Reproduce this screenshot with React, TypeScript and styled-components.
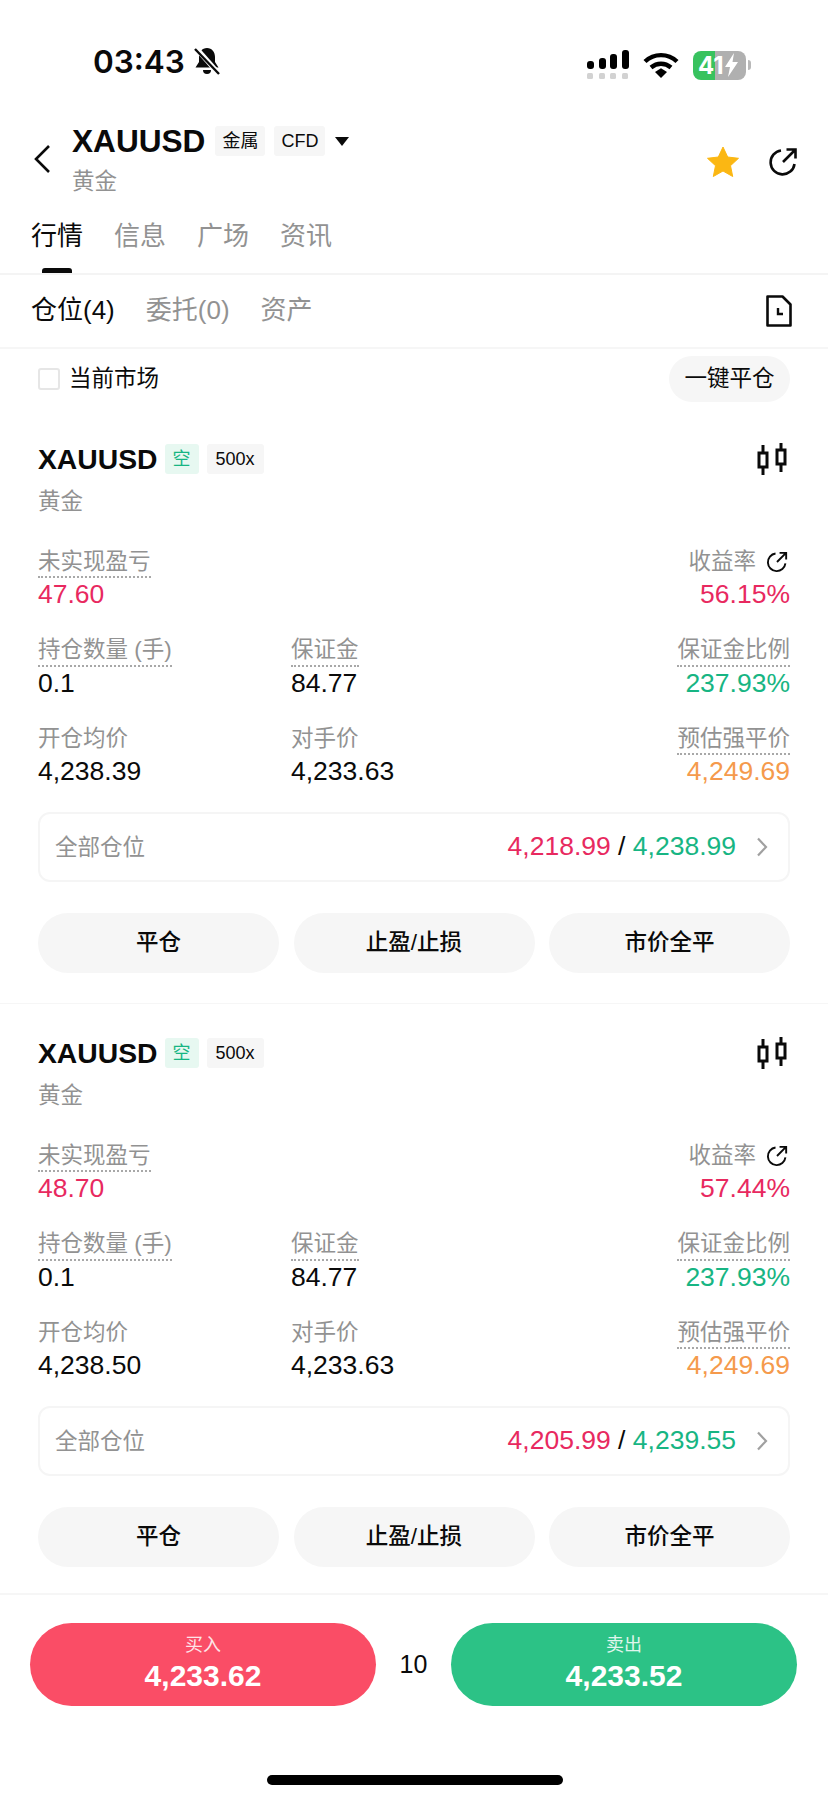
import React from "react";
import styled, { createGlobalStyle } from "styled-components";

const GlobalStyle = createGlobalStyle`
  html, body {
    margin: 0;
    padding: 0;
    background: #fff;
  }
  * {
    box-sizing: border-box;
  }
`;

const RED = "#e8295f";
const GREEN = "#17b583";
const ORANGE = "#f59a4c";
const GREY = "#929292";

const Page = styled.div`
  width: 828px;
  height: 1800px;
  overflow: hidden;
  background: #fff;
  color: #0a0a0a;
  font-family: "Liberation Sans", "Noto Sans CJK SC", sans-serif;
  display: flex;
  flex-direction: column;
`;

/* status bar */
const StatusBar = styled.div`
  flex: none;
  height: 122px;
  padding: 43px 77px 0 93px;
  display: flex;
  justify-content: space-between;
  align-items: flex-start;
`;

const Clock = styled.div`
  display: flex;
  align-items: center;
  gap: 8px;
  height: 36px;
  font-family: Inter, sans-serif;
  font-size: 31.5px;
  font-weight: 600;
`;

const StatusIcons = styled.div`
  display: flex;
  align-items: center;
  gap: 14px;
  height: 36px;
  margin-top: 4px;
`;

const Battery = styled.div`
  position: relative;
  width: 53px;
  height: 29px;
  border-radius: 8px;
  overflow: hidden;
  background: linear-gradient(90deg, #38c25f 0 41%, #b0b0b0 41% 100%);
  color: #fff;
  font-family: Inter, sans-serif;
  font-size: 24px;
  font-weight: 700;
  line-height: 29px;
  padding-left: 5px;
  display: flex;
  align-items: center;
`;

const BatteryNub = styled.div`
  width: 3px;
  height: 10px;
  margin-left: -12px;
  border-radius: 0 3px 3px 0;
  background: #b8b8b8;
`;

/* symbol header */
const Header = styled.div`
  flex: none;
  height: 80px;
  padding: 0 30px 6px 33px;
  display: flex;
  align-items: center;
`;

const TitleBlock = styled.div`
  margin-left: 21px;
  flex: 1;
`;

const TitleRow = styled.div`
  display: flex;
  align-items: center;
  height: 40px;
`;

const Symbol = styled.div`
  font-size: 31.6px;
  font-weight: 700;
  margin-right: 10px;
`;

const HeaderTag = styled.div`
  height: 30px;
  padding: 0 7px;
  margin-right: 9px;
  background: #f6f6f6;
  border-radius: 3px;
  font-size: 18px;
  line-height: 30px;
`;

const Caret = styled.div`
  width: 0;
  height: 0;
  margin-left: 1px;
  border-left: 7px solid transparent;
  border-right: 7px solid transparent;
  border-top: 9px solid #0a0a0a;
`;

const SubName = styled.div`
  margin-top: 6px;
  height: 30px;
  font-size: 22.5px;
  line-height: 30px;
  color: ${GREY};
`;

const HeaderActions = styled.div`
  display: flex;
  align-items: center;
  gap: 29px;
  margin-top: 5px;
`;

/* main tabs */
const MainTabs = styled.div`
  flex: none;
  height: 73px;
  padding: 15px 31px 0;
  display: flex;
  gap: 31px;
  border-bottom: 2px solid #f4f4f4;
`;

const MainTab = styled.div<{ $active?: boolean }>`
  position: relative;
  height: 38px;
  font-size: 26px;
  line-height: 38px;
  color: ${(p) => (p.$active ? "#0a0a0a" : GREY)};

  &::after {
    content: "";
    display: ${(p) => (p.$active ? "block" : "none")};
    position: absolute;
    left: 11px;
    top: 51px;
    width: 30px;
    height: 5px;
    border-radius: 3px 3px 0 0;
    background: #0a0a0a;
  }
`;

/* position tabs */
const SubTabs = styled.div`
  flex: none;
  height: 74px;
  padding: 0 36px 0 31px;
  display: flex;
  align-items: center;
  gap: 31px;
  border-bottom: 2px solid #f6f6f6;
`;

const SubTab = styled.div<{ $active?: boolean }>`
  font-size: 26px;
  margin-top: -8px;
  color: ${(p) => (p.$active ? "#0a0a0a" : GREY)};
`;

const DocButton = styled.div`
  margin-left: auto;
  display: flex;
`;

/* filter row */
const FilterRow = styled.div`
  flex: none;
  height: 54px;
  padding: 6px 38px 0;
  display: flex;
  align-items: center;
  justify-content: space-between;
`;

const FilterLabel = styled.label`
  display: flex;
  align-items: center;
  gap: 9px;
  font-size: 22.5px;
  line-height: 22px;
`;

const CheckBox = styled.span`
  width: 22px;
  height: 22px;
  border: 2px solid #e6e6e6;
  border-radius: 3px;
`;

const CloseAll = styled.div`
  width: 121px;
  height: 46px;
  border-radius: 23px;
  background: #f6f6f6;
  font-size: 22.5px;
  line-height: 46px;
  text-align: center;
`;

/* position card */
const Cards = styled.div`
  flex: 1;
  min-height: 0;
`;

const Card = styled.div`
  padding: 38px 38px 31px;
  height: 600px;

  & + & {
    height: 563px;
    padding-top: 31px;
    border-top: 1px solid #f6f6f6;
  }
`;

const CardHead = styled.div`
  height: 36px;
  display: flex;
  align-items: center;
`;

const CardSymbol = styled.div`
  font-size: 28.3px;
  font-weight: 700;
  margin-right: 7px;
`;

const SideTag = styled.div`
  width: 34px;
  height: 30px;
  margin-right: 8px;
  border-radius: 3px;
  background: #e7f8f1;
  color: ${GREEN};
  font-size: 18px;
  line-height: 30px;
  text-align: center;
`;

const LeverageTag = styled.div`
  width: 57px;
  height: 30px;
  border-radius: 3px;
  background: #f6f6f6;
  font-size: 18px;
  line-height: 30px;
  text-align: center;
`;

const CandleButton = styled.div`
  margin-left: auto;
  margin-right: 3px;
  display: flex;
`;

const CardName = styled.div`
  margin-top: 10px;
  height: 30px;
  font-size: 22.5px;
  line-height: 30px;
  color: ${GREY};
`;

const StatGrid = styled.div`
  margin-top: 29px;
  display: grid;
  grid-template-columns: 253px 1fr auto;
  grid-auto-rows: 88.5px;
`;

const Stat = styled.div<{ $right?: boolean }>`
  display: flex;
  flex-direction: column;
  align-items: ${(p) => (p.$right ? "flex-end" : "flex-start")};
`;

const StatLabel = styled.div<{ $dotted?: boolean }>`
  display: flex;
  align-items: center;
  gap: 10px;
  height: 32px;
  padding-top: 1px;
  font-size: 22.5px;
  line-height: 30px;
  color: ${GREY};
  border-bottom: 2px dotted ${(p) => (p.$dotted ? "#a8a8a8" : "transparent")};
`;

const RateIcon = styled.span`
  display: flex;
  margin-right: 2px;
`;

const StatValue = styled.div<{ $color?: string }>`
  height: 32px;
  font-size: 26.5px;
  line-height: 32px;
  color: ${(p) => p.$color || "#0a0a0a"};
`;

const AllPositions = styled.div`
  margin-top: 0;
  height: 70px;
  padding: 0 20px 0 15px;
  border: 2px solid #f5f5f5;
  border-radius: 12px;
  display: flex;
  align-items: center;
  justify-content: space-between;
`;

const AllLabel = styled.div`
  font-size: 22.5px;
  margin-top: -4px;
  color: ${GREY};
`;

const TpSl = styled.div`
  display: flex;
  align-items: center;
  gap: 20px;
  font-size: 26.5px;
`;

const Price = styled.span<{ $color: string }>`
  color: ${(p) => p.$color};
`;

const Actions = styled.div`
  margin-top: 31px;
  display: grid;
  grid-template-columns: repeat(3, 1fr);
  gap: 14.5px;
`;

const ActionButton = styled.div`
  height: 60px;
  border-radius: 30px;
  background: #f6f6f6;
  font-size: 22.5px;
  font-weight: 500;
  line-height: 60px;
  text-align: center;
`;

/* order bar */
const OrderBar = styled.div`
  flex: none;
  height: 207px;
  padding: 28px 31px 0 30px;
  border-top: 2px solid #f6f6f6;
  position: relative;
`;

const OrderRow = styled.div`
  display: flex;
  align-items: center;
  justify-content: space-between;
`;

const OrderButton = styled.div<{ $color: string }>`
  width: 346px;
  height: 83px;
  border-radius: 42px;
  background: ${(p) => p.$color};
  color: #fff;
  text-align: center;
  padding-top: 10px;
`;

const OrderLabel = styled.div`
  font-size: 18px;
  line-height: 24px;
  opacity: 0.85;
`;

const OrderPrice = styled.div`
  font-size: 30px;
  font-weight: 700;
  line-height: 38px;
`;

const Spread = styled.div`
  font-size: 25px;
`;

const HomeBar = styled.div`
  position: absolute;
  left: 267px;
  bottom: 15px;
  width: 296px;
  height: 10px;
  border-radius: 5px;
  background: #000;
`;

const BellOff = () => (
  <svg width="28" height="30" viewBox="0 0 28 30">
    <path d="M14 2c-5 0-8 4-8 9v5l-3.5 5.5h23L22 16v-5c0-5-3-9-8-9z" fill="#0a0a0a" />
    <path d="M10 24a4 4 0 0 0 8 0z" fill="#0a0a0a" />
    <path d="M3 2l23 26" stroke="#fff" strokeWidth="5" />
    <path d="M2 3l24 25" stroke="#0a0a0a" strokeWidth="2.4" />
  </svg>
);

const SignalIcon = () => (
  <svg width="42" height="30" viewBox="0 0 42 30">
    <rect x="0" y="11" width="7" height="8" rx="3" fill="#000" />
    <rect x="12" y="8" width="7" height="11" rx="3" fill="#000" />
    <rect x="23" y="4" width="7" height="15" rx="3" fill="#000" />
    <rect x="35" y="0" width="7" height="19" rx="3" fill="#000" />
    <rect x="0" y="23" width="6" height="6" rx="1.5" fill="#d2d2d2" />
    <rect x="12" y="23" width="6" height="6" rx="1.5" fill="#d2d2d2" />
    <rect x="23" y="23" width="6" height="6" rx="1.5" fill="#d2d2d2" />
    <rect x="35" y="23" width="6" height="6" rx="1.5" fill="#d2d2d2" />
  </svg>
);

const WifiIcon = () => (
  <svg width="36" height="28" viewBox="0 0 36 28" fill="none">
    <path d="M2 10.5C11 2 25 2 34 10.5" stroke="#000" strokeWidth="4.4" />
    <path d="M8 16.5c6-5 14-5 20 0" stroke="#000" strokeWidth="4.4" />
    <path d="M12 21l6-3.8 6 3.8-6 6z" fill="#000" />
  </svg>
);

const BoltIcon = () => (
  <svg width="15" height="24" viewBox="0 0 15 24">
    <path d="M10 0L1 14h5l-2 10 10-15H8.500z" fill="#fff" />
  </svg>
);

const BackIcon = () => (
  <svg width="18" height="30" viewBox="0 0 18 30" fill="none">
    <path d="M16 2L3 15l13 13" stroke="#0a0a0a" strokeWidth="2.6" />
  </svg>
);

const StarIcon = () => (
  <svg width="32" height="32" viewBox="0 0 32 32">
    <path
      d="M16 1l4.700 10 10.800 1.300-8 7.400 2.200 10.800L16 25l-9.700 5.500 2.200-10.800-8-7.400L11.300 11z"
      fill="#fbb713"
      stroke="#fbb713"
      strokeLinejoin="round"
    />
  </svg>
);

const ShareIcon = ({ size = 30 }: { size?: number }) => (
  <svg width={size} height={size} viewBox="0 0 30 30" fill="none">
    <path d="M13 3.500A12 12 0 1 0 26.500 17" stroke="#0a0a0a" strokeWidth="2.600" />
    <path d="M15 15L27 3M18.500 2.500H27.500V11.500" stroke="#0a0a0a" strokeWidth="2.600" />
  </svg>
);

const DocClockIcon = () => (
  <svg width="26" height="32" viewBox="0 0 26 32" fill="none">
    <path d="M1.500 1.500h15l8 8v21h-23z" stroke="#0a0a0a" strokeWidth="2.600" strokeLinejoin="round" />
    <path d="M12 13v6h5" stroke="#0a0a0a" strokeWidth="2.400" />
  </svg>
);

const CandleIcon = () => (
  <svg width="30" height="32" viewBox="0 0 30 32" fill="none" stroke="#0a0a0a" strokeWidth="3">
    <rect x="2" y="10" width="8" height="14" />
    <path d="M6 2v8M6 24v8" />
    <rect x="20" y="7" width="8" height="14" />
    <path d="M24 0v7M24 21v8" />
  </svg>
);

const ChevronIcon = () => (
  <svg width="12" height="20" viewBox="0 0 12 20" fill="none">
    <path d="M2 1.500L10 10l-8 8.500" stroke="#a0a0a0" strokeWidth="2.200" />
  </svg>
);

type Position = {
  pnl: string;
  rate: string;
  open: string;
  tp: string;
  sl: string;
};

const positions: Position[] = [
  { pnl: "47.60", rate: "56.15%", open: "4,238.39", tp: "4,218.99", sl: "4,238.99" },
  { pnl: "48.70", rate: "57.44%", open: "4,238.50", tp: "4,205.99", sl: "4,239.55" },
];

const PositionCard: React.FC<{ data: Position }> = ({ data }) => (
  <Card>
    <CardHead>
      <CardSymbol>XAUUSD</CardSymbol>
      <SideTag>空</SideTag>
      <LeverageTag>500x</LeverageTag>
      <CandleButton>
        <CandleIcon />
      </CandleButton>
    </CardHead>
    <CardName>黄金</CardName>
    <StatGrid>
      <Stat>
        <StatLabel $dotted>未实现盈亏</StatLabel>
        <StatValue $color={RED}>{data.pnl}</StatValue>
      </Stat>
      <Stat />
      <Stat $right>
        <StatLabel>
          收益率
          <RateIcon>
            <ShareIcon size={22} />
          </RateIcon>
        </StatLabel>
        <StatValue $color={RED}>{data.rate}</StatValue>
      </Stat>
      <Stat>
        <StatLabel $dotted>持仓数量 (手)</StatLabel>
        <StatValue>0.1</StatValue>
      </Stat>
      <Stat>
        <StatLabel $dotted>保证金</StatLabel>
        <StatValue>84.77</StatValue>
      </Stat>
      <Stat $right>
        <StatLabel $dotted>保证金比例</StatLabel>
        <StatValue $color={GREEN}>237.93%</StatValue>
      </Stat>
      <Stat>
        <StatLabel>开仓均价</StatLabel>
        <StatValue>{data.open}</StatValue>
      </Stat>
      <Stat>
        <StatLabel>对手价</StatLabel>
        <StatValue>4,233.63</StatValue>
      </Stat>
      <Stat $right>
        <StatLabel $dotted>预估强平价</StatLabel>
        <StatValue $color={ORANGE}>4,249.69</StatValue>
      </Stat>
    </StatGrid>
    <AllPositions>
      <AllLabel>全部仓位</AllLabel>
      <TpSl>
        <span>
          <Price $color={RED}>{data.tp}</Price> / <Price $color={GREEN}>{data.sl}</Price>
        </span>
        <ChevronIcon />
      </TpSl>
    </AllPositions>
    <Actions>
      <ActionButton>平仓</ActionButton>
      <ActionButton>止盈/止损</ActionButton>
      <ActionButton>市价全平</ActionButton>
    </Actions>
  </Card>
);

const App: React.FC = () => (
  <Page>
    <GlobalStyle />
    <StatusBar>
      <Clock>
        03:43
        <BellOff />
      </Clock>
      <StatusIcons>
        <SignalIcon />
        <WifiIcon />
        <Battery>
          41
          <BoltIcon />
        </Battery>
        <BatteryNub />
      </StatusIcons>
    </StatusBar>
    <Header>
      <BackIcon />
      <TitleBlock>
        <TitleRow>
          <Symbol>XAUUSD</Symbol>
          <HeaderTag>金属</HeaderTag>
          <HeaderTag>CFD</HeaderTag>
          <Caret />
        </TitleRow>
        <SubName>黄金</SubName>
      </TitleBlock>
      <HeaderActions>
        <StarIcon />
        <ShareIcon />
      </HeaderActions>
    </Header>
    <MainTabs>
      <MainTab $active>行情</MainTab>
      <MainTab>信息</MainTab>
      <MainTab>广场</MainTab>
      <MainTab>资讯</MainTab>
    </MainTabs>
    <SubTabs>
      <SubTab $active>仓位(4)</SubTab>
      <SubTab>委托(0)</SubTab>
      <SubTab>资产</SubTab>
      <DocButton>
        <DocClockIcon />
      </DocButton>
    </SubTabs>
    <FilterRow>
      <FilterLabel>
        <CheckBox />
        当前市场
      </FilterLabel>
      <CloseAll>一键平仓</CloseAll>
    </FilterRow>
    <Cards>
      {positions.map((p) => (
        <PositionCard key={p.pnl} data={p} />
      ))}
    </Cards>
    <OrderBar>
      <OrderRow>
        <OrderButton $color="#fa4d66">
          <OrderLabel>买入</OrderLabel>
          <OrderPrice>4,233.62</OrderPrice>
        </OrderButton>
        <Spread>10</Spread>
        <OrderButton $color="#2cc286">
          <OrderLabel>卖出</OrderLabel>
          <OrderPrice>4,233.52</OrderPrice>
        </OrderButton>
      </OrderRow>
      <HomeBar />
    </OrderBar>
  </Page>
);

export default App;
